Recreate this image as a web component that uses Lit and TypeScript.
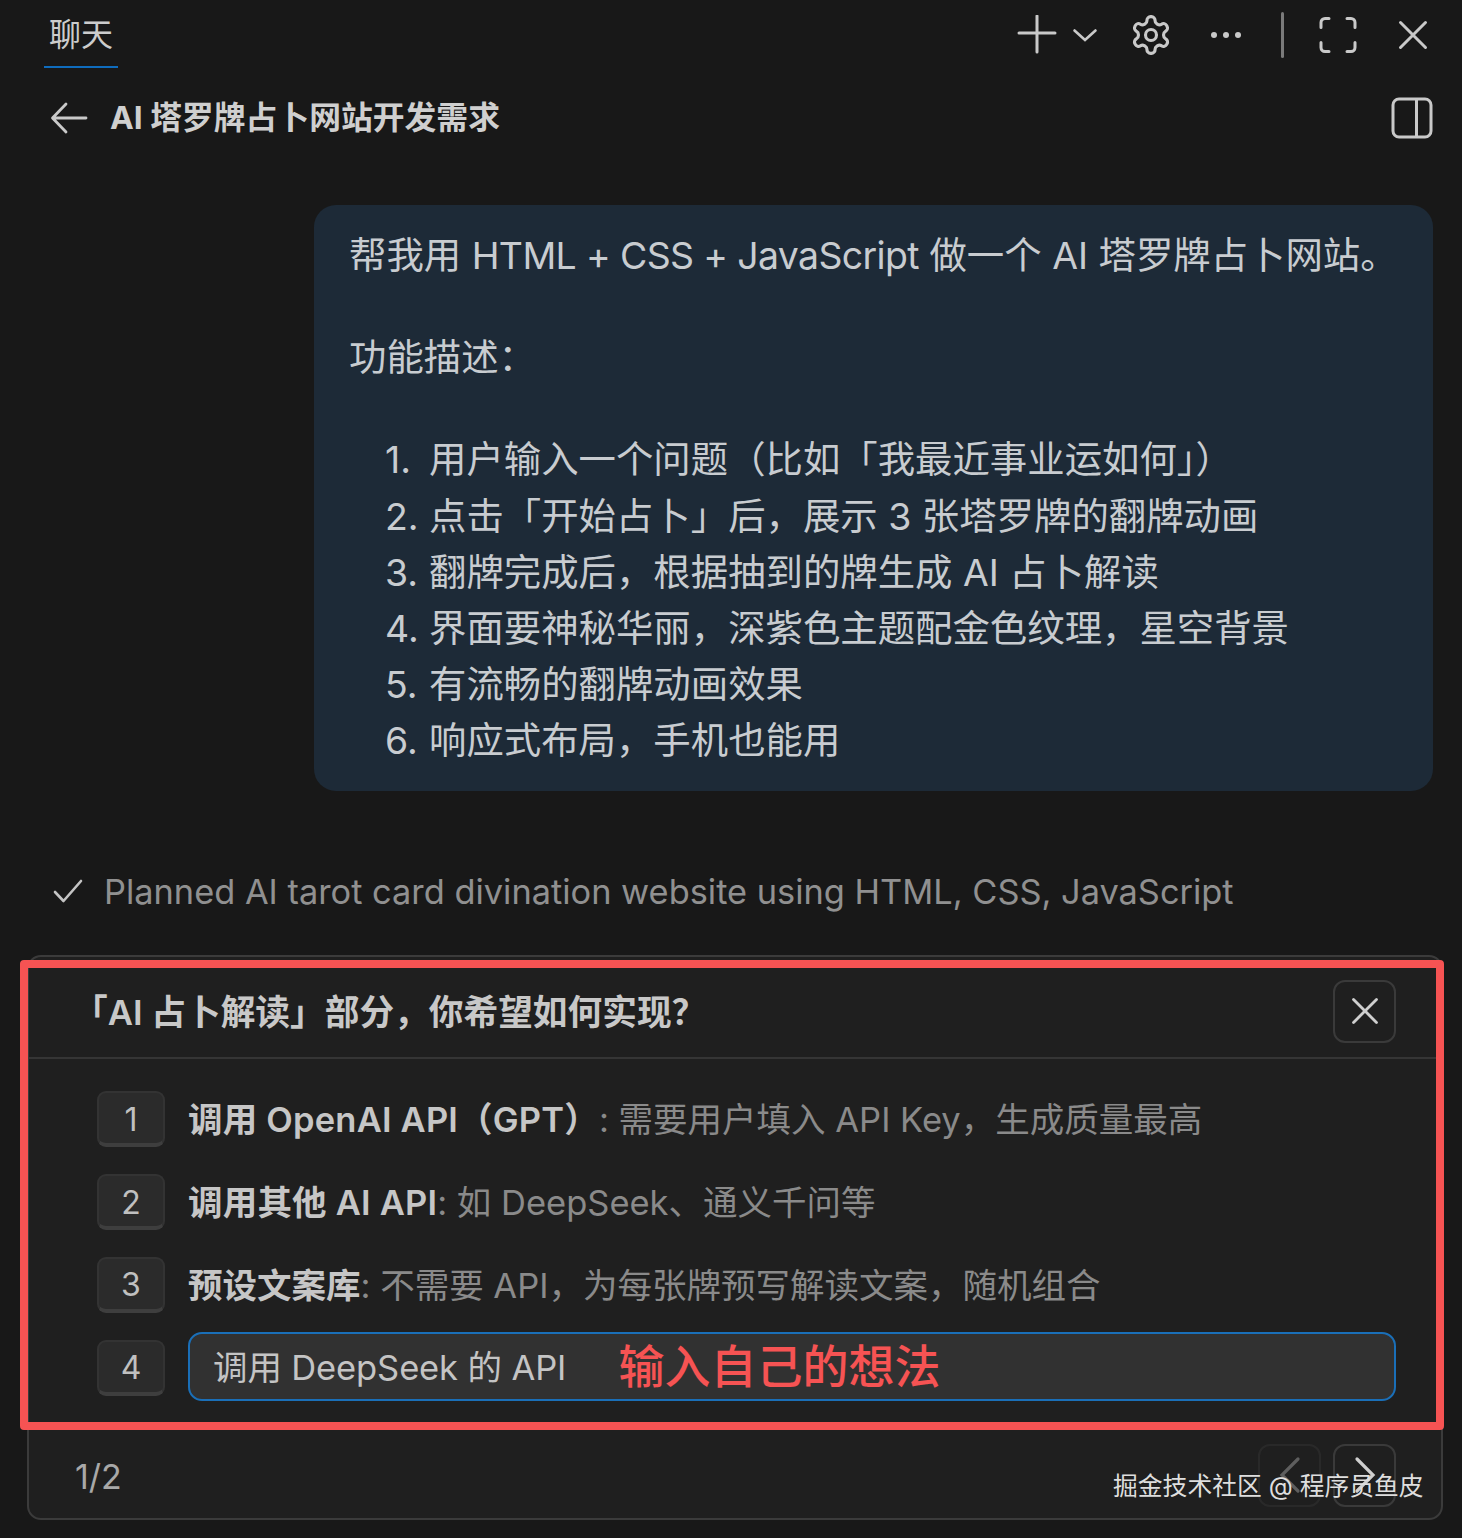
import { LitElement, html, css } from "lit";
import { customElement } from "lit/decorators.js";

const gear = "M12.22 2h-.44a2 2 0 0 0-2 2v.18a2 2 0 0 1-1 1.73l-.43.25a2 2 0 0 1-2 0l-.15-.08a2 2 0 0 0-2.73.73l-.22.38a2 2 0 0 0 .73 2.73l.15.1a2 2 0 0 1 1 1.72v.51a2 2 0 0 1-1 1.74l-.15.09a2 2 0 0 0-.73 2.73l.22.38a2 2 0 0 0 2.73.73l.15-.08a2 2 0 0 1 2 0l.43.25a2 2 0 0 1 1 1.73V20a2 2 0 0 0 2 2h.44a2 2 0 0 0 2-2v-.18a2 2 0 0 1 1-1.73l.43-.25a2 2 0 0 1 2 0l.15.08a2 2 0 0 0 2.73-.73l.22-.39a2 2 0 0 0-.73-2.73l-.15-.08a2 2 0 0 1-1-1.74v-.5a2 2 0 0 1 1-1.74l.15-.09a2 2 0 0 0 .73-2.73l-.22-.38a2 2 0 0 0-2.73-.73l-.15.08a2 2 0 0 1-2 0l-.43-.25a2 2 0 0 1-1-1.73V4a2 2 0 0 0-2-2z";

const closeIcon = (cls: string) => html`<svg class=${cls} viewBox="0 0 34 34" fill="none" stroke="currentColor" stroke-width="3" stroke-linecap="round"><path d="M4.5 4.5l25 25M29.5 4.5l-25 25"/></svg>`;

const options = [
  { n: "1", strong: "调用 OpenAI API（GPT）", rest: ": 需要用户填入 API Key，生成质量最高", cls: "wide" },
  { n: "2", strong: "调用其他 AI API", rest: ": 如 DeepSeek、通义千问等", cls: "wide" },
  { n: "3", strong: "预设文案库", rest: ": 不需要 API，为每张牌预写解读文案，随机组合", cls: "" },
];

const items = [
  "用户输入一个问题（比如「我最近事业运如何」）",
  "点击「开始占卜」后，展示 3 张塔罗牌的翻牌动画",
  "翻牌完成后，根据抽到的牌生成 AI 占卜解读",
  "界面要神秘华丽，深紫色主题配金色纹理，星空背景",
  "有流畅的翻牌动画效果",
  "响应式布局，手机也能用",
];

@customElement("app-root")
export class AppRoot extends LitElement {
  static styles = css`
    :host {
      display: block;
      position: relative;
      width: 1462px;
      height: 1538px;
      overflow: hidden;
      background: #181818;
      color: #c8c8c8;
      font-family: "Inter", "Noto Sans CJK SC", sans-serif;
    }
    svg { display: block; flex: none; }
    .topbar { display: flex; align-items: flex-start; justify-content: space-between; height: 68px; padding: 0 32px 0 44px; }
    .tab { width: 74px; height: 68px; box-sizing: border-box; border-bottom: 2px solid #0f6cbd; text-align: center; font-size: 32px; line-height: 70px; color: #cccccc; }
    .acts { display: flex; align-items: center; box-sizing: border-box; height: 68px; padding-top: 2px; color: #c9c9c9; }
    .plus { width: 40px; height: 40px; }
    .chev { width: 28px; height: 16px; margin-left: 14px; }
    .gear { width: 44px; height: 44px; margin-left: 30px; }
    .dots { width: 32px; height: 8px; margin-left: 37px; }
    .sep { width: 3px; height: 46px; margin-left: 39px; background: #7a7a7a; border-radius: 2px; }
    .expand { width: 40px; height: 40px; margin-left: 34px; }
    .x { width: 34px; height: 34px; margin-left: 38px; }

    .titlebar { display: flex; align-items: center; height: 100px; padding: 0 29px 0 50px; }
    .back { width: 38px; height: 32px; color: #c9c9c9; }
    .title { margin-left: 22px; flex: 1; padding-bottom: 6px; font-size: 31.8px; font-weight: 700; color: #cfcfcf; }
    .split { width: 42px; height: 42px; color: #c9c9c9; }

    .bubble { box-sizing: border-box; margin: 37px 29px 0 314px; padding: 23px 36px 22px 35px; height: 586px; background: #1d2a37; border-radius: 22px; font-size: 37.4px; line-height: 56.2px; color: #c8ccd0; }
    .bubble p { margin: 0 0 46px; white-space: nowrap; }
    .lat { letter-spacing: -0.62px; }
    .bubble ol { list-style: none; margin: 0; padding: 0 0 0 36px; }
    .bubble li { display: flex; }
    .bubble li span:first-child { width: 44px; flex: none; }

    .plan { display: flex; align-items: center; height: 60px; margin-top: 70px; padding-left: 53px; font-size: 34.36px; color: #909090; }
    .check { width: 30px; height: 24px; margin-right: 21px; color: #c4c4c4; }

    .panel { box-sizing: border-box; margin: 34px 19px 0 27px; height: 565px; border: 2px solid #3b3b3b; border-radius: 14px; background: #1f1f1f; }
    .qhead { display: flex; align-items: center; justify-content: space-between; height: 102px; padding: 8px 45px 0 44px; box-sizing: border-box; border-bottom: 2px solid #353535; }
    .question { padding-bottom: 2px; font-size: 34.7px; font-weight: 600; color: #c8c8c8; }
    .iconbtn { box-sizing: border-box; width: 63px; height: 63px; display: flex; align-items: center; justify-content: center; border: 2px solid #3a3a3a; border-radius: 12px; color: #cfcfcf; }
    .iconbtn svg.xs { width: 30px; height: 30px; }
    .opts { display: flex; flex-direction: column; gap: 26.5px; padding: 32px 45px 0 68px; }
    .opt { display: flex; align-items: center; height: 56.4px; gap: 23px; font-size: 34.5px; color: #8a8a8a; white-space: nowrap; }
    .opt .text { padding-bottom: 4px; }
    .key { box-sizing: border-box; width: 68px; height: 56px; padding-top: 2px; flex: none; display: flex; align-items: center; justify-content: center; background: #2b2b2b; border: 2px solid #333; border-bottom: 4px solid #3e3e3e; border-radius: 9px; font-size: 32px; color: #c0c0c0; }
    .opt strong { font-weight: 600; color: #c6c6c6; }
    .opt strong.wide { letter-spacing: .2px; }
    .input { flex: 1; box-sizing: border-box; height: 69px; margin-top: -2px; padding: 0 0 4px 23px; display: flex; align-items: center; background: #313131; border: 2px solid #1a6fb8; border-radius: 14px; color: #c4c4c4; letter-spacing: -.12px; }
    .foot { display: flex; align-items: center; gap: 12px; margin-top: 47.3px; padding: 0 45px 0 46px; height: 64px; }
    .page { flex: 1; padding-top: 2px; font-size: 34px; color: #a8a8a8; }
    .prev { opacity: .4; }

    .redbox { position: absolute; left: 20px; top: 960px; width: 1424px; height: 470px; box-sizing: border-box; border: 8px solid #f65353; border-radius: 4px; pointer-events: none; }
    .note { position: absolute; left: 618.5px; top: 1332px; font-size: 46px; line-height: 68px; font-weight: 500; color: #f65353; white-space: nowrap; }
    .mark { position: absolute; left: 1113px; top: 1466px; font-size: 24.8px; line-height: 40px; color: #dedede; white-space: nowrap; }
  `;

  render() {
    return html`
      <div class="topbar">
        <div class="tab">聊天</div>
        <div class="acts">
          <svg class="plus" viewBox="0 0 40 40" fill="none" stroke="currentColor" stroke-width="3" stroke-linecap="round"><path d="M20 1v36M2 18h36"/></svg>
          <svg class="chev" viewBox="0 0 28 16" fill="none" stroke="currentColor" stroke-width="2.6" stroke-linecap="round"><path d="M3.5 3.5L14 13 24.5 3.5"/></svg>
          <svg class="gear" viewBox="0 0 24 24" fill="none" stroke="currentColor" stroke-width="1.7" stroke-linejoin="round"><path d=${gear}/><circle cx="12" cy="12" r="3"/></svg>
          <svg class="dots" viewBox="0 0 32 8" fill="currentColor"><circle cx="4" cy="4" r="3"/><circle cx="16" cy="4" r="3"/><circle cx="28" cy="4" r="3"/></svg>
          <div class="sep"></div>
          <svg class="expand" viewBox="0 0 40 40" fill="none" stroke="currentColor" stroke-width="3" stroke-linecap="round"><path d="M11 3.5H7a4 4 0 0 0-4 4v5M29 3.5h4a4 4 0 0 1 4 4v5M11 36.5H7a4 4 0 0 1-4-4v-5M29 36.5h4a4 4 0 0 0 4-4v-5"/></svg>
          ${closeIcon("x")}
        </div>
      </div>

      <div class="titlebar">
        <svg class="back" viewBox="0 0 38 32" fill="none" stroke="currentColor" stroke-width="2.8" stroke-linecap="round" stroke-linejoin="round"><path d="M36 16H3M16 2L2.5 16 16 30"/></svg>
        <div class="title">AI 塔罗牌占卜网站开发需求</div>
        <svg class="split" viewBox="0 0 42 42" fill="none" stroke="currentColor" stroke-width="3"><rect x="2" y="2" width="38" height="38" rx="6"/><path d="M25.5 2v38"/></svg>
      </div>

      <div class="bubble">
        <p>帮我用 <span class="lat">HTML + CSS + JavaScript</span> 做一个 AI 塔罗牌占卜网站。</p>
        <p>功能描述：</p>
        <ol>
          ${items.map((t, i) => html`<li><span>${i + 1}.</span><span>${t}</span></li>`)}
        </ol>
      </div>

      <div class="plan">
        <svg class="check" viewBox="0 0 30 24" fill="none" stroke="currentColor" stroke-width="2.6" stroke-linecap="round" stroke-linejoin="round"><path d="M2 13l8.5 9L28 2"/></svg>
        Planned AI tarot card divination website using HTML, CSS, JavaScript
      </div>

      <div class="panel">
        <div class="qhead">
          <div class="question">「AI 占卜解读」部分，你希望如何实现？</div>
          <div class="iconbtn"><svg class="xs" viewBox="0 0 34 34" fill="none" stroke="currentColor" stroke-width="3.2" stroke-linecap="round"><path d="M4 4l26 26M30 4L4 30"/></svg></div>
        </div>
        <div class="opts">
          ${options.map((o) => html`
            <div class="opt"><div class="key">${o.n}</div><div class="text"><strong class=${o.cls}>${o.strong}</strong>${o.rest}</div></div>
          `)}
          <div class="opt"><div class="key">4</div><div class="input">调用 DeepSeek 的 API</div></div>
        </div>
        <div class="foot">
          <div class="page">1/2</div>
          <div class="iconbtn prev"><svg width="30" height="40" viewBox="0 0 30 40" fill="none" stroke="#bdbdbd" stroke-width="3.2" stroke-linecap="round"><path d="M23 4L7 20l16 16"/></svg></div>
          <div class="iconbtn"><svg width="30" height="40" viewBox="0 0 30 40" fill="none" stroke="#cfcfcf" stroke-width="3.2" stroke-linecap="round"><path d="M7 4l16 16L7 36"/></svg></div>
        </div>
      </div>

      <div class="redbox"></div>
      <div class="note">输入自己的想法</div>
      <div class="mark">掘金技术社区 @ 程序员鱼皮</div>
    `;
  }
}
